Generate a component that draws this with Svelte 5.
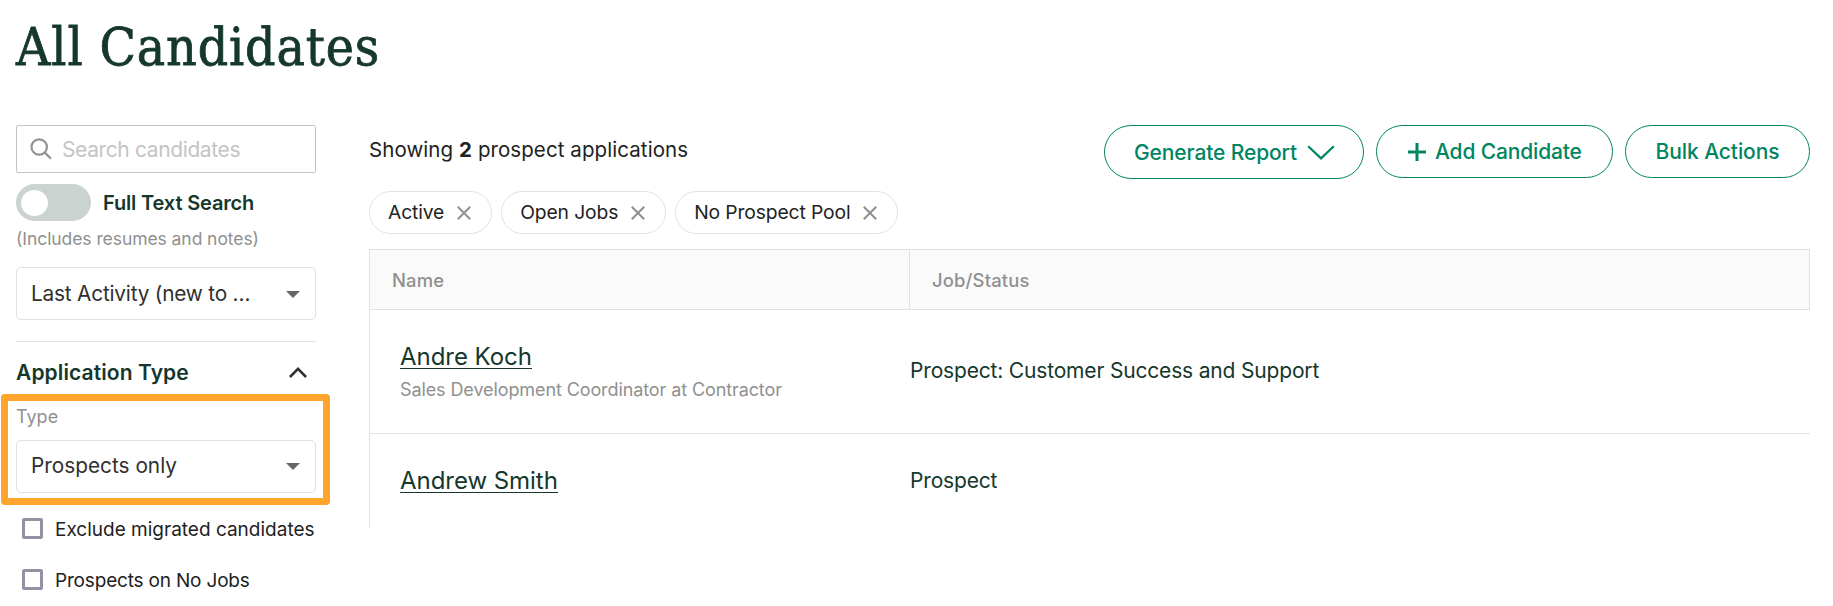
<script lang="ts">
  type Candidate = { name: string; title?: string; status: string };

  let search = '';
  let fullText = false;

  const filters = ['Active', 'Open Jobs', 'No Prospect Pool'];

  const candidates: Candidate[] = [
    {
      name: 'Andre Koch',
      title: 'Sales Development Coordinator at Contractor',
      status: 'Prospect: Customer Success and Support'
    },
    { name: 'Andrew Smith', status: 'Prospect' }
  ];

  let options = [
    { label: 'Exclude migrated candidates', checked: false },
    { label: 'Prospects on No Jobs', checked: false }
  ];
</script>

<div class="page">
  <h1>All Candidates</h1>

  <div class="layout">
    <aside class="sidebar">
      <label class="search">
        <svg width="22" height="22" viewBox="0 0 22 22" aria-hidden="true">
          <circle cx="9.2" cy="9" r="7.7" />
          <path d="M14.6 14.4 21 20.8" />
        </svg>
        <input type="text" placeholder="Search candidates" bind:value={search} />
      </label>

      <div class="toggle-row">
        <button
          class="toggle"
          class:on={fullText}
          role="switch"
          aria-checked={fullText}
          aria-label="Full Text Search"
          on:click={() => (fullText = !fullText)}
        >
          <span class="knob"></span>
        </button>
        <span class="toggle-label">Full Text Search</span>
      </div>
      <p class="hint">(Includes resumes and notes)</p>

      <button class="select sort">
        <span>Last Activity (new to …</span>
        <svg class="caret" width="14" height="7" viewBox="0 0 14 7" aria-hidden="true">
          <path d="M0 0h14L7 7z" />
        </svg>
      </button>

      <section class="filter-group">
        <button class="group-header">
          <span>Application Type</span>
          <svg width="18" height="11" viewBox="0 0 18 11" aria-hidden="true">
            <path d="M.9 10 9 1.9l8.1 8.1" />
          </svg>
        </button>

        <div class="type-field">
          <span class="field-label">Type</span>
          <button class="select">
            <span>Prospects only</span>
            <svg class="caret" width="14" height="7" viewBox="0 0 14 7" aria-hidden="true">
              <path d="M0 0h14L7 7z" />
            </svg>
          </button>
        </div>

        {#each options as option}
          <label class="check">
            <input type="checkbox" bind:checked={option.checked} />
            <span>{option.label}</span>
          </label>
        {/each}
      </section>
    </aside>

    <main class="content">
      <div class="top">
        <div>
          <p class="count">Showing <strong>2</strong> prospect applications</p>
          <div class="pills">
            {#each filters as filter}
              <button class="pill">
                {filter}
                <svg width="14" height="14" viewBox="0 0 14 14" aria-hidden="true">
                  <path d="M.8.8l12.4 12.4M13.2.8.8 13.2" />
                </svg>
              </button>
            {/each}
          </div>
        </div>

        <div class="actions">
          <button class="btn report">
            Generate Report
            <svg width="28" height="15" viewBox="0 0 28 15" aria-hidden="true">
              <path d="M1.2 1.2 14 13.4 26.8 1.2" />
            </svg>
          </button>
          <button class="btn add">
            <svg width="18" height="18" viewBox="0 0 18 18" aria-hidden="true">
              <path d="M9 0v18M0 9h18" />
            </svg>
            Add Candidate
          </button>
          <button class="btn bulk">Bulk Actions</button>
        </div>
      </div>

      <div class="table">
        <div class="row head">
          <div class="cell">Name</div>
          <div class="cell">Job/Status</div>
        </div>
        {#each candidates as candidate}
          <div class="row body">
            <div class="who">
              <a href="#candidate">{candidate.name}</a>
              {#if candidate.title}
                <p class="title">{candidate.title}</p>
              {/if}
            </div>
            <div class="status">{candidate.status}</div>
          </div>
        {/each}
      </div>
    </main>
  </div>
</div>

<style>
  :global(body) {
    background: #fff;
  }

  .page {
    --green: #15372c;
    --action: #008561;
    --line: #e1e1e1;
    --muted: #909090;
    box-sizing: border-box;
    height: 606px;
    overflow: hidden;
    padding: 0 23px 0 16px;
    font-family: Inter, 'Liberation Sans', sans-serif;
    color: #222;
  }

  .page *,
  .page *::before {
    box-sizing: border-box;
  }

  h1,
  p {
    margin: 0;
  }

  button {
    margin: 0;
    padding: 0;
    font: inherit;
    color: inherit;
    background: none;
    border: none;
    cursor: pointer;
    white-space: nowrap;
  }

  svg {
    flex: none;
    fill: none;
    stroke: currentColor;
  }

  h1 {
    height: 125px;
    padding-top: 12px;
    font-family: 'DejaVu Serif Condensed', 'DejaVu Serif', serif;
    font-size: 53px;
    font-stretch: condensed;
    font-weight: 400;
    line-height: 70px;
    letter-spacing: 0.85px;
    color: var(--green);
    -webkit-text-stroke: 0.8px var(--green);
  }

  .layout {
    display: grid;
    grid-template-columns: 300px 1fr;
    column-gap: 53px;
  }

  .search {
    display: flex;
    align-items: center;
    gap: 10px;
    height: 48px;
    padding: 0 14px 0 13px;
    border: 1px solid #c4c4c4;
    border-radius: 2px;
    color: #929292;
  }

  .search svg {
    stroke-width: 2.2;
  }

  .search input {
    width: 100%;
    min-width: 0;
    padding: 0;
    border: none;
    outline: none;
    font: 21px Inter, sans-serif;
    letter-spacing: -0.38px;
    color: #222;
  }

  .search input::placeholder {
    color: #c4c4c4;
    opacity: 1;
  }

  .toggle-row {
    display: flex;
    align-items: center;
    gap: 12px;
    margin-top: 11px;
  }

  .toggle {
    display: flex;
    align-items: center;
    width: 75px;
    height: 37px;
    padding: 0 5px;
    border-radius: 19px;
    background: #cbd3d0;
  }

  .toggle.on {
    justify-content: flex-end;
    background: var(--action);
  }

  .knob {
    width: 27px;
    height: 26px;
    border-radius: 50%;
    background: #fff;
  }

  .toggle-label {
    font-size: 20px;
    font-weight: 600;
    letter-spacing: -0.15px;
    color: var(--green);
  }

  .hint {
    margin-top: 5px;
    font-size: 17.5px;
    line-height: 26px;
    letter-spacing: -0.07px;
    color: var(--muted);
  }

  .select {
    display: flex;
    align-items: center;
    justify-content: space-between;
    width: 100%;
    height: 53px;
    padding: 0 15px 2px 14px;
    border: 1px solid var(--line);
    border-radius: 5px;
    font-size: 20.8px;
    color: #303030;
  }

  .sort {
    margin-top: 15px;
    padding-bottom: 0;
    letter-spacing: -0.2px;
  }

  .caret {
    position: relative;
    top: 1px;
    fill: #666;
    stroke: none;
  }

  .filter-group {
    margin-top: 21px;
    border-top: 1px solid var(--line);
  }

  .group-header {
    display: flex;
    align-items: center;
    justify-content: space-between;
    width: 100%;
    height: 61px;
    padding-right: 9px;
    font-size: 21px;
    font-weight: 600;
    letter-spacing: 0.1px;
    color: var(--green);
  }

  .group-header svg {
    stroke: #303030;
    stroke-width: 2.6;
  }

  .type-field {
    position: relative;
    margin-bottom: 10px;
  }

  /* highlight frame around the field */
  .type-field::before {
    content: '';
    position: absolute;
    inset: -9px -14px -12px -15px;
    border: 7px solid #ffa52e;
    border-radius: 4px;
    pointer-events: none;
  }

  .field-label {
    display: block;
    height: 37px;
    font-size: 18px;
    line-height: 27px;
    color: var(--muted);
  }

  .check {
    display: flex;
    align-items: center;
    gap: 12px;
    height: 51px;
    padding-left: 6px;
    font-size: 19px;
    white-space: nowrap;
  }

  .check input {
    appearance: none;
    flex: none;
    width: 21px;
    height: 21px;
    margin: 0;
    border: 3px solid #9292a3;
    border-radius: 2px;
  }

  .check input:checked {
    background: var(--action);
  }

  .check span {
    padding-top: 1px;
  }

  .check:last-child {
    letter-spacing: -0.18px;
  }

  .top {
    display: flex;
    justify-content: space-between;
    align-items: flex-start;
    height: 124px;
  }

  .count {
    padding-top: 1px;
    font-size: 20.5px;
    line-height: 48px;
    letter-spacing: 0.08px;
  }

  .pills {
    display: flex;
    gap: 9px;
    margin-top: 17px;
  }

  .pill {
    display: flex;
    align-items: center;
    gap: 13px;
    height: 43px;
    padding: 0 20px 2px 18px;
    border: 1px solid var(--line);
    border-radius: 22px;
    font-size: 19.3px;
    letter-spacing: -0.13px;
  }

  .pill svg {
    position: relative;
    top: 1px;
    stroke: #909090;
    stroke-width: 2;
  }

  .actions {
    display: flex;
    align-items: flex-start;
    gap: 12px;
  }

  .btn {
    display: flex;
    align-items: center;
    height: 53px;
    border: 1px solid var(--action);
    border-radius: 27px;
    font-size: 21px;
    font-weight: 500;
    color: var(--action);
  }

  .report {
    gap: 10px;
    width: 260px;
    height: 54px;
    padding-left: 29px;
    letter-spacing: -0.12px;
  }

  .report svg {
    stroke-width: 2.2;
  }

  .add {
    gap: 9px;
    width: 237px;
    padding-left: 31px;
    letter-spacing: -0.15px;
  }

  .add svg {
    stroke-width: 3;
  }

  .bulk {
    justify-content: center;
    width: 185px;
    letter-spacing: -0.08px;
  }

  .table {
    border-left: 1px solid var(--line);
  }

  .row {
    display: grid;
    grid-template-columns: 540px 1fr;
  }

  .head {
    height: 61px;
    border: 1px solid var(--line);
    border-left: none;
    background: #fafafa;
    font-size: 18.4px;
    font-weight: 500;
    letter-spacing: 0.18px;
    color: var(--muted);
  }

  .cell {
    display: flex;
    align-items: center;
    padding-left: 22px;
    border-right: 1px solid var(--line);
  }

  .cell:last-child {
    border-right: none;
  }

  .body {
    align-items: center;
    height: 124px;
    border-bottom: 1px solid var(--line);
    color: var(--green);
  }

  .body:last-child {
    height: 94px;
    border-bottom: none;
  }

  .who {
    padding-left: 30px;
  }

  .who a {
    display: inline-block;
    border-bottom: 1px solid var(--green);
    font-size: 24px;
    line-height: 23px;
    letter-spacing: -0.04px;
    color: var(--green);
    text-decoration: none;
  }

  .who:has(.title) {
    padding-top: 5px;
  }

  .title {
    margin-top: 8px;
    font-size: 18px;
    line-height: 26px;
    letter-spacing: -0.1px;
    color: var(--muted);
  }

  .status {
    padding-bottom: 2px;
    font-size: 21px;
    letter-spacing: -0.17px;
  }
</style>
